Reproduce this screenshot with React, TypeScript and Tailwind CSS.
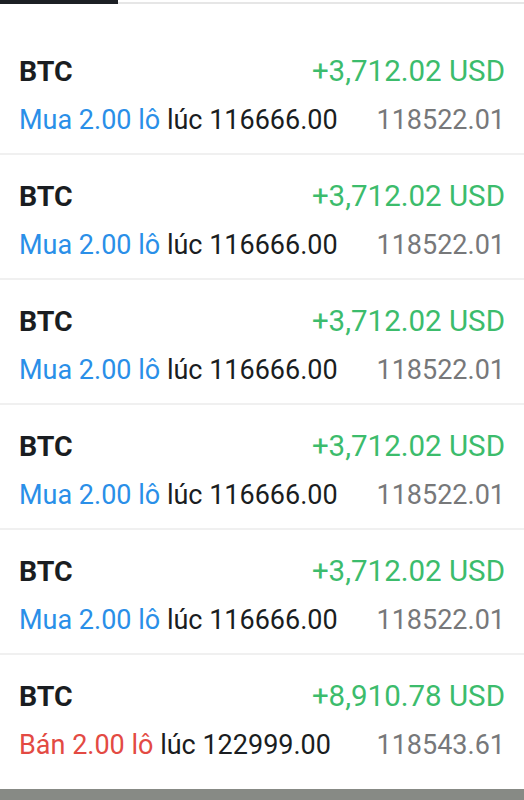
import React from 'react';

type Trade = {
  symbol: string;
  profit: string;
  side: 'Mua' | 'Bán';
  lots: string;
  openPrice: string;
  current: string;
};

const trades: Trade[] = [
  { symbol: 'BTC', profit: '+3,712.02 USD', side: 'Mua', lots: '2.00', openPrice: '116666.00', current: '118522.01' },
  { symbol: 'BTC', profit: '+3,712.02 USD', side: 'Mua', lots: '2.00', openPrice: '116666.00', current: '118522.01' },
  { symbol: 'BTC', profit: '+3,712.02 USD', side: 'Mua', lots: '2.00', openPrice: '116666.00', current: '118522.01' },
  { symbol: 'BTC', profit: '+3,712.02 USD', side: 'Mua', lots: '2.00', openPrice: '116666.00', current: '118522.01' },
  { symbol: 'BTC', profit: '+3,712.02 USD', side: 'Mua', lots: '2.00', openPrice: '116666.00', current: '118522.01' },
  { symbol: 'BTC', profit: '+8,910.78 USD', side: 'Bán', lots: '2.00', openPrice: '122999.00', current: '118543.61' },
];

const TradeRow = ({ trade, last }: { trade: Trade; last: boolean }) => (
  <div className={`h-[125px] px-[19px] pt-[25px] ${last ? '' : 'border-b-2 border-[#f0f0f0]'}`}>
    <div className="flex items-center justify-between h-[33px] leading-[33px]">
      <span className="text-[28.5px] font-bold text-[#1a1d21]">{trade.symbol}</span>
      <span className="text-[29.5px] text-[#3cbc6c]">{trade.profit}</span>
    </div>
    <div className="mt-[16px] flex items-center justify-between h-[32px] leading-[32px] text-[27px]">
      <span>
        <span className={trade.side === 'Mua' ? 'text-[#2a8fe8]' : 'text-[#e34a43]'}>
          {trade.side} {trade.lots} lô
        </span>{' '}
        <span className="text-[#1a1d21]">lúc {trade.openPrice}</span>
      </span>
      <span className="text-[#77787a]">{trade.current}</span>
    </div>
  </div>
);

export default function App() {
  return (
    <div className="w-[524px] h-[800px] bg-white flex flex-col overflow-hidden font-['Roboto',sans-serif]">
      <div className="flex h-[4px] shrink-0">
        <div className="w-[118px] bg-[#1c1f24]" />
        <div className="flex-1 flex flex-col">
          <div className="h-[3px]" />
          <div className="h-[2px] bg-[#e6e6e6]" />
        </div>
      </div>
      <div className="pt-[26px] flex-1">
        {trades.map((t, i) => (
          <TradeRow key={i} trade={t} last={i === trades.length - 1} />
        ))}
      </div>
      <div className="h-[11px] shrink-0 bg-[#878a85]" />
    </div>
  );
}
